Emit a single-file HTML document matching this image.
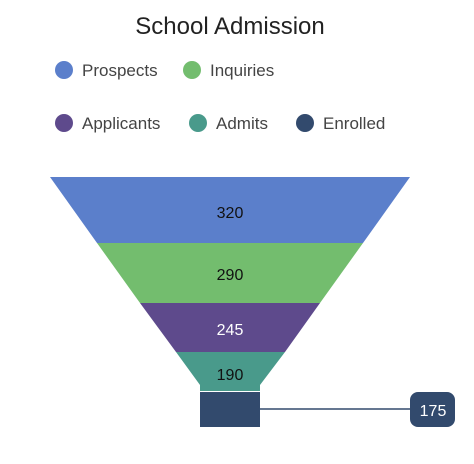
<!DOCTYPE html>
<html><head><style>
html,body{margin:0;padding:0;background:#fff;}
</style></head><body>
<svg width="474" height="459" viewBox="0 0 474 459" xmlns="http://www.w3.org/2000/svg" font-family="'Segoe UI','Liberation Sans',sans-serif">
<text x="230" y="34" text-anchor="middle" font-size="24" fill="#222">School Admission</text>
<g font-size="17" fill="#444">
<circle cx="64" cy="70" r="9" fill="#5b7fcb"/><text x="82" y="76">Prospects</text>
<circle cx="192" cy="70" r="9" fill="#73bd6e"/><text x="210" y="76">Inquiries</text>
<circle cx="64" cy="123" r="9" fill="#5e4a8c"/><text x="82" y="129">Applicants</text>
<circle cx="198" cy="123" r="9" fill="#499a8b"/><text x="216" y="129">Admits</text>
<circle cx="305" cy="123" r="9" fill="#324a6d"/><text x="323" y="129">Enrolled</text>
</g>
<polygon points="50,177 410,177 363,243 97,243" fill="#5b7fcb"/>
<polygon points="97,243 363,243 320,303 140,303" fill="#73bd6e"/>
<polygon points="140,303 320,303 285,352 176,352" fill="#5e4a8c"/>
<polygon points="176,352 285,352 260,385 260,391 200,391 200,385" fill="#499a8b"/>
<rect x="200" y="392" width="60" height="35" fill="#324a6d"/>
<line x1="260" y1="409" x2="412" y2="409" stroke="#324a6d" stroke-width="1.5"/>
<rect x="410" y="392" width="45" height="35" rx="8" fill="#324a6d"/>
<g font-size="16" text-anchor="middle">
<text x="230" y="218" fill="#111">320</text>
<text x="230" y="280" fill="#111">290</text>
<text x="230" y="335" fill="#fff">245</text>
<text x="230" y="380" fill="#111">190</text>
<text x="433" y="416" fill="#fff">175</text>
</g>
</svg>
</body></html>
